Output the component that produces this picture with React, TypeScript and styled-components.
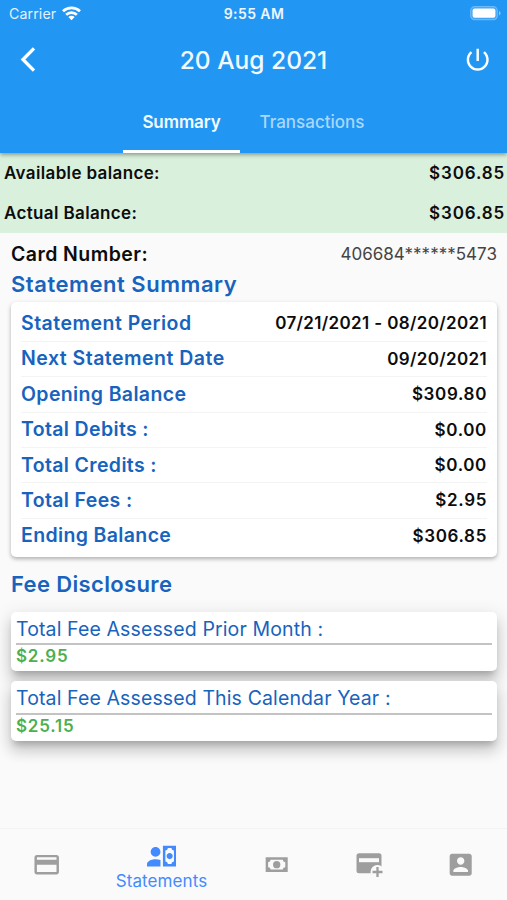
import React from "react";
import styled, { createGlobalStyle } from "styled-components";

const GlobalStyle = createGlobalStyle`
  * { box-sizing: border-box; }
  body { margin: 0; background: #fafafa; font-family: Inter, "Noto Sans", sans-serif; }
`;

const Screen = styled.div`
  width: 507px;
  height: 900px;
  display: flex;
  flex-direction: column;
  background: #fafafa;
  overflow: hidden;
`;

const Label = styled.span<{ $size: number; $weight?: number; $spacing?: number; $color?: string }>`
  font-size: ${(p) => p.$size}px;
  font-weight: ${(p) => p.$weight ?? 400};
  letter-spacing: ${(p) => p.$spacing ?? 0}px;
  color: ${(p) => p.$color ?? "#0c0c0c"};
  line-height: 1.2;
  white-space: nowrap;
`;

const Header = styled.header`
  height: 152.5px;
  flex: none;
  background: #2196f3;
  box-shadow: 0 2px 4px rgba(0, 0, 0, 0.35);
  position: relative;
  z-index: 1;
`;

const StatusBar = styled.div`
  height: 27px;
  display: grid;
  grid-template-columns: 1fr auto 1fr;
  align-items: center;
  padding: 0 6px 0 9px;
`;

const Clock = styled.div`
  display: flex;
  padding: 2px 2px 0 0;
`;

const Carrier = styled.div`
  display: flex;
  align-items: center;
  gap: 6px;
`;

const BatterySlot = styled.div`
  display: flex;
  justify-content: flex-end;
`;

const TitleBar = styled.div`
  height: 66px;
  padding-top: 1px;
  display: grid;
  grid-template-columns: 80px 1fr 80px;
  align-items: center;
  justify-items: center;
`;

const IconButton = styled.button<{ $side: "start" | "end" }>`
  display: flex;
  border: 0;
  padding: 0;
  background: none;
  color: #fff;
  justify-self: ${(p) => p.$side};
  margin: ${(p) => (p.$side === "start" ? "0 0 2px 20px" : "0 15px 1px 0")};
`;

const Tabs = styled.nav`
  height: 59.5px;
  display: flex;
  justify-content: center;
`;

const Tab = styled.div<{ $active?: boolean }>`
  width: ${(p) => (p.$active ? 117 : 144)}px;
  padding-top: 2px;
  display: flex;
  align-items: center;
  justify-content: center;
  border-bottom: 3px solid ${(p) => (p.$active ? "#fff" : "transparent")};
`;

const Balances = styled.section`
  flex: none;
  height: 80.5px;
  padding: 1px 2px 0 4px;
  background: #d9f0dc;
`;

const BalanceRow = styled.div`
  height: 40px;
  display: flex;
  align-items: center;
  justify-content: space-between;
`;

const Content = styled.main`
  flex: 1;
  padding: 6px 10px 0 11px;
`;

const CardNumber = styled.div`
  height: 30px;
  padding-top: 1px;
  display: flex;
  align-items: center;
  justify-content: space-between;
`;

const Heading = styled.h2<{ $height: number; $lift?: number }>`
  margin: 0;
  height: ${(p) => p.$height}px;
  padding-bottom: ${(p) => p.$lift ?? 0}px;
  display: flex;
  align-items: center;
`;

const SummaryCard = styled.section`
  height: 254.5px;
  padding: 3.5px 10px 0;
  background: #fff;
  border-radius: 5px;
  box-shadow: 0 2px 4px rgba(0, 0, 0, 0.3);
`;

const SummaryRow = styled.div`
  height: 35.4px;
  display: flex;
  align-items: center;
  justify-content: space-between;
  & + & { border-top: 1px solid #f4f4f4; }
`;

const FeeList = styled.div`
  display: flex;
  flex-direction: column;
  gap: 10px;
`;

const FeeCard = styled.section`
  height: 59.5px;
  padding: 4px 5px;
  background: #fff;
  border-radius: 5px;
  box-shadow: 0 6px 6px -3px rgba(0, 0, 0, 0.2), 0 10px 14px 1px rgba(0, 0, 0, 0.14),
    0 4px 18px 3px rgba(0, 0, 0, 0.08);
`;

const FeeName = styled.div`
  height: 29.5px;
  display: flex;
  align-items: center;
  border-bottom: 2px solid #c3c3c3;
`;

const FeeAmount = styled.div`
  height: 23px;
  display: flex;
  align-items: center;
`;

const BottomNav = styled.nav`
  height: 72px;
  flex: none;
  display: grid;
  grid-template-columns: 94px 135px 96px 89px 93px;
  border-top: 1px solid #f3f3f3;
  color: #9e9e9e;
`;

const NavItem = styled.div<{ $active?: boolean }>`
  display: flex;
  flex-direction: column;
  align-items: center;
  justify-content: center;
  color: ${(p) => (p.$active ? "#448aff" : "#9e9e9e")};
  padding-top: ${(p) => (p.$active ? 4 : 0)}px;
`;

const WifiIcon = () => (
  <svg width="19" height="15" viewBox="0 0 19 15" fill="none" stroke="#fff" strokeWidth="2.7">
    <path d="M1 5.2C5.8.7 13.2.7 18 5.2" />
    <path d="M4.1 8.7C7.2 5.8 11.8 5.8 14.9 8.7" />
    <path d="M9.5 14.2 6.3 11Q9.5 8.3 12.7 11Z" fill="#fff" stroke="none" />
  </svg>
);

const BatteryIcon = () => (
  <svg width="31" height="15" viewBox="0 0 31 15">
    <rect x=".7" y=".7" width="26.6" height="13" rx="4" fill="#fff" fillOpacity=".15" stroke="#6dbaf7" strokeWidth="1.2" />
    <rect x="2.6" y="2.6" width="22.8" height="9.2" rx="2" fill="#fff" />
    <path d="M29 5c2 .8 2 3.7 0 4.5Z" fill="#8cc8f8" />
  </svg>
);

const BackIcon = () => (
  <svg width="16" height="25" viewBox="0 0 16 25" fill="none" stroke="#fff" strokeWidth="3.4">
    <path d="M14 1.4 3 12.5 14 23.6" />
  </svg>
);

const Icon = ({ d, size = 29.4 }: { d: string; size?: number }) => (
  <svg width={size} height={size} viewBox="0 0 24 24" fill="currentColor" fillRule="evenodd">
    <path d={d} />
  </svg>
);

const CardPlusIcon = () => (
  <svg width="27" height="26" viewBox="0 0 27 26">
    <rect x=".5" y="1.2" width="25" height="20" rx="2.5" fill="#9e9e9e" />
    <rect x="3" y="6.2" width="20" height="4" fill="#fafafa" />
    <circle cx="21.5" cy="20" r="7" fill="#fafafa" />
    <path d="M21.5 15v10M16.5 20h10" stroke="#9e9e9e" strokeWidth="2.3" />
  </svg>
);

const icons = {
  power:
    "M13 3h-2v10h2V3zm4.83 2.17-1.42 1.42C17.99 7.86 19 9.81 19 12c0 3.87-3.13 7-7 7s-7-3.13-7-7c0-2.19 1.01-4.14 2.58-5.42L6.17 5.17C4.23 6.82 3 9.26 3 12c0 4.97 4.03 9 9 9s9-4.03 9-9c0-2.74-1.23-5.18-3.17-6.83z",
  card: "M20 4H4c-1.11 0-1.99.89-1.99 2L2 18c0 1.11.89 2 2 2h16c1.11 0 2-.89 2-2V6c0-1.11-.89-2-2-2zm0 14H4v-6h16v6zm0-10H4V6h16v2z",
  accountCash:
    "M11 8C11 10.21 9.21 12 7 12S3 10.21 3 8 4.79 4 7 4 11 5.79 11 8M11 14.72V20H0V18C0 15.79 3.13 14 7 14C8.5 14 9.87 14.27 11 14.72M24 20H13V3H24V20M16 11.5C16 12.88 17.12 14 18.5 14S21 12.88 21 11.5 19.88 9 18.5 9 16 10.12 16 11.5M22 7C20.9 7 20 6.11 20 5H17C17 6.11 16.11 7 15 7V16C16.11 16 17 16.9 17 18H20C20 16.9 20.9 16 22 16V7Z",
  cash: "M3 6H21V18H3V6M12 9A3 3 0 0 1 15 12A3 3 0 0 1 12 15A3 3 0 0 1 9 12A3 3 0 0 1 12 9M7 8A2 2 0 0 1 5 10V14A2 2 0 0 1 7 16H17A2 2 0 0 1 19 14V10A2 2 0 0 1 17 8H7Z",
  account:
    "M3 5v14c0 1.1.89 2 2 2h14c1.1 0 2-.9 2-2V5c0-1.1-.9-2-2-2H5c-1.11 0-2 .9-2 2zm12 4c0 1.66-1.34 3-3 3s-3-1.34-3-3 1.34-3 3-3 3 1.34 3 3zm-9 8c0-2 4-3.1 6-3.1s6 1.1 6 3.1v1H6v-1z",
};

const balances = [
  ["Available balance:", "$306.85"],
  ["Actual Balance:", "$306.85"],
];

const summary = [
  { name: "Statement Period", value: "07/21/2021 - 08/20/2021", isDate: true },
  { name: "Next Statement Date", value: "09/20/2021", isDate: true },
  { name: "Opening Balance", value: "$309.80" },
  { name: "Total Debits :", value: "$0.00" },
  { name: "Total Credits :", value: "$0.00" },
  { name: "Total Fees :", value: "$2.95" },
  { name: "Ending Balance", value: "$306.85" },
];

const fees = [
  ["Total Fee Assessed Prior Month :", "$2.95"],
  ["Total Fee Assessed This Calendar Year :", "$25.15"],
];

const BLUE = "#1763bd";

export default function App() {
  return (
    <Screen>
      <GlobalStyle />
      <Header>
        <StatusBar>
          <Carrier>
            <Label $size={14.2} $spacing={0.1} $color="#e3f2fe">Carrier</Label>
            <WifiIcon />
          </Carrier>
          <Clock>
            <Label $size={14} $weight={600} $spacing={0.4} $color="#eef7ff">9:55 AM</Label>
          </Clock>
          <BatterySlot><BatteryIcon /></BatterySlot>
        </StatusBar>
        <TitleBar>
          <IconButton $side="start" aria-label="Back"><BackIcon /></IconButton>
          <Label as="h1" $size={24.5} $weight={500} $spacing={0} $color="#f3faff">20 Aug 2021</Label>
          <IconButton $side="end" aria-label="Log out"><Icon d={icons.power} /></IconButton>
        </TitleBar>
        <Tabs>
          <Tab $active><Label $size={17} $weight={600} $spacing={-0.1} $color="#f3faff">Summary</Label></Tab>
          <Tab><Label $size={17} $weight={500} $spacing={0} $color="#a9d8fb">Transactions</Label></Tab>
        </Tabs>
      </Header>
      <Balances>
        {balances.map(([name, value]) => (
          <BalanceRow key={name}>
            <Label $size={17} $weight={600} $spacing={0.36}>{name}</Label>
            <Label $size={17} $weight={600} $spacing={0.85}>{value}</Label>
          </BalanceRow>
        ))}
      </Balances>
      <Content>
        <CardNumber>
          <Label $size={19.5} $weight={600} $spacing={0.43}>Card Number:</Label>
          <Label $size={17} $spacing={0.02} $color="#444">406684******5473</Label>
        </CardNumber>
        <Heading $height={33} $lift={2}>
          <Label $size={22} $weight={600} $spacing={0.54} $color={BLUE}>Statement Summary</Label>
        </Heading>
        <SummaryCard>
          {summary.map(({ name, value, isDate }) => (
            <SummaryRow key={name}>
              <Label $size={19.5} $weight={600} $spacing={isDate ? 0.48 : 0.36} $color={BLUE}>{name}</Label>
              <Label $size={17} $weight={600} $spacing={isDate ? 0.35 : 0.65}>{value}</Label>
            </SummaryRow>
          ))}
        </SummaryCard>
        <Heading $height={55}>
          <Label $size={22} $weight={600} $spacing={0.36} $color={BLUE}>Fee Disclosure</Label>
        </Heading>
        <FeeList>
          {fees.map(([name, value]) => (
            <FeeCard key={name}>
              <FeeName><Label $size={19.5} $spacing={0.12} $color={BLUE}>{name}</Label></FeeName>
              <FeeAmount><Label $size={17} $weight={600} $spacing={0.8} $color="#4caf50">{value}</Label></FeeAmount>
            </FeeCard>
          ))}
        </FeeList>
      </Content>
      <BottomNav>
        <NavItem><Icon d={icons.card} /></NavItem>
        <NavItem $active>
          <Icon d={icons.accountCash} />
          <Label $size={17} $spacing={0.1} $color="#448aff">Statements</Label>
        </NavItem>
        <NavItem><Icon d={icons.cash} /></NavItem>
        <NavItem><CardPlusIcon /></NavItem>
        <NavItem><Icon d={icons.account} /></NavItem>
      </BottomNav>
    </Screen>
  );
}
